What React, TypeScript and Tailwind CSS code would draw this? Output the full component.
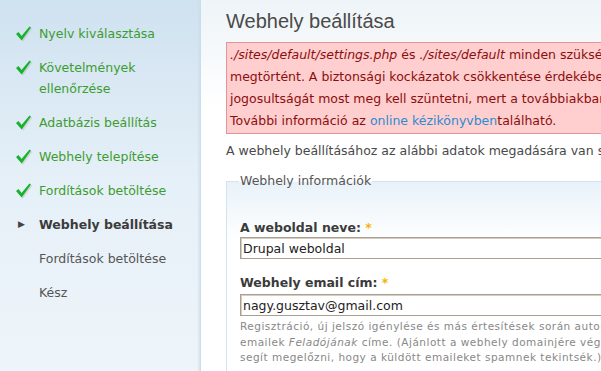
import React from "react";

function Check() {
  return (
    <svg width="19" height="19" viewBox="0 0 19 19" className="shrink-0">
      <path d="M2.5 10.5 L5 8.5 L8 12.5 L16 3 L17.5 4 L8.2 17 Z" fill="#bdbdbd" opacity="0.5" transform="translate(0.8 0.8)" />
      <path d="M2 10 L4.5 8 L7.5 12 L15.5 2.5 L17 3.5 L7.7 16.5 Z" fill="#17b32b" />
    </svg>
  );
}

const done = [
  ["Nyelv kiválasztása"],
  ["Követelmények", "ellenőrzése"],
  ["Adatbázis beállítás"],
  ["Webhely telepítése"],
  ["Fordítások betöltése"],
];

export default function App() {
  return (
    <div
      className="flex h-[371px] w-[601px] overflow-hidden bg-white"
      style={{ fontFamily: '"DejaVu Sans", Verdana, sans-serif' }}
    >
      {/* Sidebar */}
      <aside className="relative w-[201px] shrink-0 bg-gradient-to-b from-[#cfe2f0] via-[#e6f0f8] to-[#eef5fa] pt-[23px]">
        <div className="absolute right-0 top-0 h-full w-[4px] bg-gradient-to-r from-transparent to-[#c9dcea]" />
        <ul className="flex flex-col gap-[13px] text-[12.5px] leading-[21px]">
          {done.map((lines) => (
            <li key={lines[0]} className="flex items-start text-[#3d9c2f]">
              <span className="ml-[14px] mr-[6px] mt-[1px] w-[19px]">
                <Check />
              </span>
              <span>
                {lines.map((l) => (
                  <div key={l}>{l}</div>
                ))}
              </span>
            </li>
          ))}
          <li className="flex items-start font-bold text-[#3b3b3b]">
            <span className="ml-[18px] mr-[6px] w-[15px] text-[9px] text-[#444]">▶</span>
            <span>Webhely beállítása</span>
          </li>
          <li className="pl-[39px] text-[#555]">Fordítások betöltése</li>
          <li className="pl-[39px] text-[#555]">Kész</li>
        </ul>
      </aside>

      {/* Main */}
      <main className="min-w-0 flex-1 overflow-hidden bg-gradient-to-b from-[#eef4f8] to-white to-[30%] pl-[25px] pt-[9px]">
        <h1
          className="text-[20px] leading-[24px] text-[#4a4a4a]"
          style={{ fontFamily: '"Liberation Sans", Arial, sans-serif' }}
        >
          Webhely beállítása
        </h1>

        <div className="mt-[9px] w-[600px] whitespace-nowrap border border-[#e39494] bg-[#ffcece] px-[3px] pb-[1px] pt-[1px] text-[12.5px] leading-[22px] text-[#8b0d0d]">
          <div>
            <em>./sites/default/settings.php</em> és <em>./sites/default</em> minden szükséges módosítása
          </div>
          <div>megtörtént. A biztonsági kockázatok csökkentése érdekében ezek írási</div>
          <div>jogosultságát most meg kell szüntetni, mert a továbbiakban nincs rá szükség.</div>
          <div>
            További információ az <span className="text-[#2b8bd2]">online kézikönyvben</span>található.
          </div>
        </div>

        <p className="mt-[7px] whitespace-nowrap text-[12.5px] leading-[20px] text-[#494949]">
          A webhely beállításához az alábbi adatok megadására van szükség.
        </p>

        <fieldset className="mt-[12px] w-[600px] border-l border-t border-[#d3e3ef] bg-gradient-to-b from-[#e9f2f9] to-white to-[60px] pb-[20px] pl-[13px] pt-[30px]">
          <legend className="ml-[-1px] px-[1px] text-[12.5px] leading-[16px] text-[#555]">Webhely információk</legend>

          <label className="block text-[12.5px] font-bold leading-[18px] text-[#3b3b3b]">
            A weboldal neve: <span className="text-[#f6b400]">*</span>
          </label>
          <input
            readOnly
            value="Drupal weboldal"
            className="block h-[22px] w-[500px] border border-[#ab9f90] bg-white px-[2px] text-[12.5px] text-[#222] shadow-[inset_1px_1px_0_#d6cdc2] outline-none"
          />

          <label className="mt-[15px] block text-[12.5px] font-bold leading-[18px] text-[#3b3b3b]">
            Webhely email cím: <span className="text-[#f6b400]">*</span>
          </label>
          <input
            readOnly
            value="nagy.gusztav@gmail.com"
            className="mt-[2px] block h-[22px] w-[500px] border border-[#ab9f90] bg-white px-[2px] text-[12.5px] text-[#222] shadow-[inset_1px_1px_0_#d6cdc2] outline-none"
          />
          <div className="mt-[3px] whitespace-nowrap text-[10.5px] leading-[15.5px] tracking-[0.5px] text-[#888]">
            <div>Regisztráció, új jelszó igénylése és más értesítések során automatikusan</div>
            <div>
              emailek <em>Feladójának</em> címe. (Ajánlott a webhely domainjére végződő cím,
            </div>
            <div>segít megelőzni, hogy a küldött emaileket spamnek tekintsék.)</div>
          </div>
        </fieldset>
      </main>
    </div>
  );
}
